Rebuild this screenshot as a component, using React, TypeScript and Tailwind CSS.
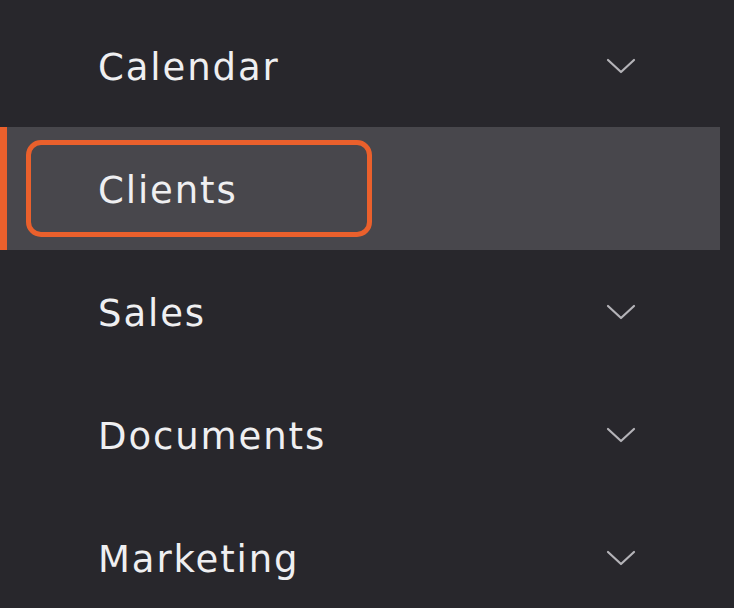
import { ReactNode } from "react";

function Chevron() {
  return (
    <svg width="30" height="16" viewBox="0 0 30 16" fill="none" className="shrink-0">
      <path d="M2 2L15 14L28 2" stroke="#b4b3b8" strokeWidth="2.2" strokeLinecap="round" strokeLinejoin="round" />
    </svg>
  );
}

const labelCls = "text-[37px] leading-none text-[#efeff1] tracking-[1.9px] pt-[4px]";

function Row({ label, chevron = true }: { label: string; chevron?: boolean }) {
  return (
    <div className="h-[123px] w-[720px] flex items-center justify-between pl-[98px] pr-[84px]">
      <span className={labelCls}>{label}</span>
      {chevron && <Chevron />}
    </div>
  );
}

function ActiveRow({ children }: { children: ReactNode }) {
  return (
    <div className="h-[123px] w-[720px] flex items-center bg-[#48474c] border-l-[7px] border-[#ea602c] pl-[19px]">
      <div className="w-[346px] h-[97px] border-[5px] border-[#ea602c] rounded-[15px] flex items-center pl-[67px]">
        {children}
      </div>
    </div>
  );
}

export default function App() {
  return (
    <div className="w-[734px] h-[608px] bg-[#28272c] overflow-hidden pt-[4px]" style={{ fontFamily: '"DejaVu Sans", sans-serif' }}>
      <Row label="Calendar" />
      <ActiveRow>
        <span className={labelCls}>Clients</span>
      </ActiveRow>
      <Row label="Sales" />
      <Row label="Documents" />
      <Row label="Marketing" />
    </div>
  );
}
